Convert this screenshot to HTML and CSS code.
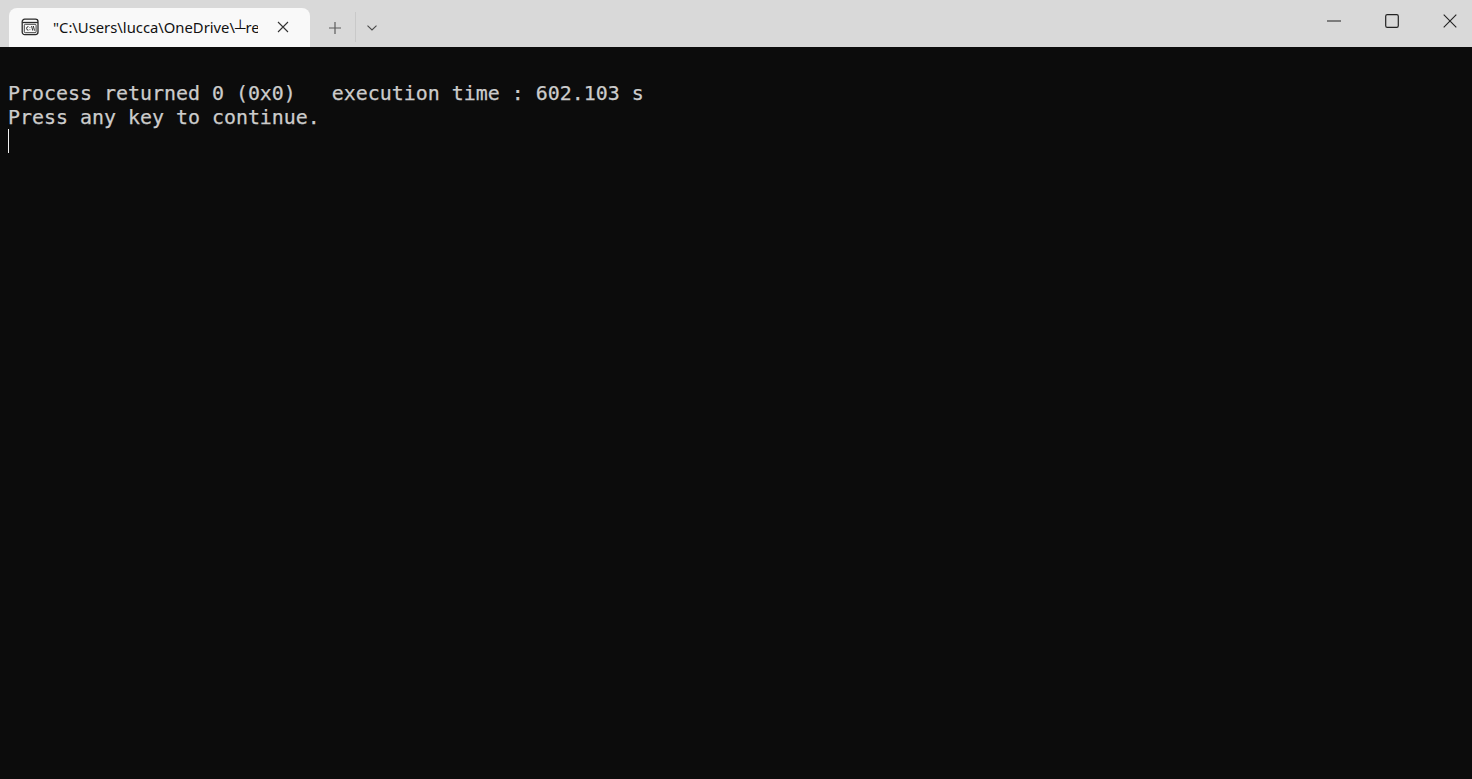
FILE: index.html
```html
<!DOCTYPE html>
<html lang="en">
<head>
<meta charset="utf-8">
<title>Terminal</title>
<link rel="stylesheet" href="styles.css">
</head>
<body>
<div class="window">
  <header class="titlebar">
    <div class="tab">
      <svg class="tab-icon" width="18" height="18" viewBox="0 0 18 18" fill="none" stroke="#2b2b2b">
        <rect x="1.2" y="1.2" width="15.8" height="15.4" rx="2.5" stroke-width="1.3"/>
        <path d="M1.5 4.5H17" stroke-width="1.3"/>
        <rect x="3.3" y="6.3" width="11.8" height="8.4" rx="1" stroke-width="0.9"/>
        <path d="M7.4 8.6a1.4 1.4 0 1 0 0 3.6M8.9 9v.6M8.9 11.4v.7M10.6 8l1.1 4.6M12.3 8l1.2 4.6" stroke-width="1"/>
      </svg>
      <span class="tab-title">"C:\Users\lucca\OneDrive\┴re</span>
      <svg class="tab-close" width="12" height="12" viewBox="0 0 12 12" stroke="#333" stroke-width="1.1" fill="none">
        <path d="M1 1l10 10M11 1L1 11"/>
      </svg>
    </div>
    <button class="new-tab" type="button" aria-label="New tab">
      <svg width="14" height="14" viewBox="0 0 14 14" stroke="#5c5c5c" stroke-width="1.2" fill="none"><path d="M7 1v12M1 7h12"/></svg>
    </button>
    <span class="divider"></span>
    <button class="tab-menu" type="button" aria-label="Tab menu">
      <svg width="10" height="6" viewBox="0 0 10 6" stroke="#4a4a4a" stroke-width="1.1" fill="none"><path d="M.5.7L5 5l4.5-4.3"/></svg>
    </button>
    <div class="caption">
      <button class="cap" type="button" aria-label="Minimize">
        <svg width="14" height="2" viewBox="0 0 14 2"><path d="M0 1h14" stroke="#4a4a4a" stroke-width="1.3"/></svg>
      </button>
      <button class="cap" type="button" aria-label="Maximize">
        <svg width="14" height="14" viewBox="0 0 14 14" fill="none"><rect x=".7" y=".7" width="12.6" height="12.6" rx="1.6" stroke="#222" stroke-width="1.2"/></svg>
      </button>
      <button class="cap" type="button" aria-label="Close">
        <svg width="14" height="14" viewBox="0 0 14 14" fill="none"><path d="M.7.7l12.6 12.6M13.3.7L.7 13.3" stroke="#222" stroke-width="1.1"/></svg>
      </button>
    </div>
  </header>
  <main class="console">
    <div class="line"></div>
    <div class="line">Process returned 0 (0x0)   execution time : 602.103 s</div>
    <div class="line">Press any key to continue.</div>
    <div class="line"><span class="cursor"></span></div>
  </main>
</div>
</body>
</html>
```
FILE: styles.css
```css
* { box-sizing: border-box; }
html, body { margin: 0; height: 100%; overflow: hidden; }
.window { display: flex; flex-direction: column; height: 779px; background: #0c0c0c; }
.titlebar {
  display: flex;
  align-items: flex-end;
  flex: 0 0 47px;
  height: 47px;
  background: #d9d9d9;
  padding-left: 9px;
}
.tab {
  display: flex;
  align-items: center;
  width: 301px;
  height: 39px;
  background: #f9f9f9;
  border-radius: 8px 8px 0 0;
  padding: 0 21px 2px 12px;
}
.tab-icon { flex: none; }
.tab-title {
  flex: 0 0 205px;
  margin-left: 14px;
  font: 14.8px/20px "Noto Sans", "Open Sans", sans-serif;
  color: #111111;
  white-space: nowrap;
  overflow: hidden;
}
.tab-close { flex: none; margin-left: 19px; }
.new-tab, .tab-menu, .cap {
  display: flex;
  align-items: center;
  justify-content: center;
  border: 0;
  padding: 0;
  background: none;
}
.new-tab { width: 42px; height: 39px; margin-left: 3px; padding-left: 2px; }
.divider { width: 1px; height: 30px; background: #c9c9c9; margin-bottom: 5px; }
.tab-menu { width: 31px; height: 39px; }
.caption { display: flex; align-self: flex-start; gap: 14px; margin-left: auto; }
.cap { width: 44px; height: 42px; }
.console {
  flex: 1;
  padding: 10px 0 0 8px;
  background: #0c0c0c;
  color: #cccccc;
  font: 19.93px/24px "DejaVu Sans Mono", monospace;
  -webkit-text-stroke: 0.25px #cccccc;
}
.line { height: 24px; line-height: 26px; white-space: pre; }
.cursor { display: block; width: 1px; height: 24px; background: #f2f2f2; }
```
